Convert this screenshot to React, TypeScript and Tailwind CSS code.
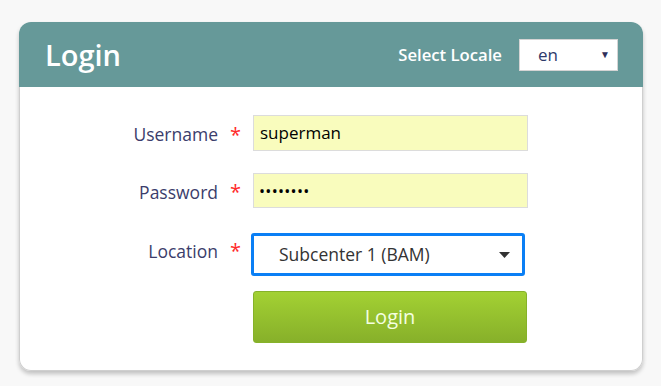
const font = { fontFamily: '"Open Sans", "Noto Sans", sans-serif' };

function Field({ label, children, labelClass = "" }: { label: string; children: React.ReactNode; labelClass?: string }) {
  return (
    <div className="flex items-center">
      <div className={`w-[198px] text-right text-[17.5px] text-[#3b3d6b] ${labelClass}`}>{label}</div>
      <div className={`w-[35px] pl-[12px] text-[20px] text-[#ff2a2a] ${labelClass}`}>*</div>
      {children}
    </div>
  );
}

export default function App() {
  return (
    <div className="min-h-[386px] w-full bg-[#f8f8f8] pt-[22px]" style={font}>
      <div className="ml-[19px] w-[624px] rounded-[12px] bg-white shadow-[0_3px_4px_rgba(0,0,0,0.22)]">
        <div className="flex h-[65px] items-center justify-between rounded-t-[12px] bg-[#669999] pl-[26px] pr-[25px]">
          <h1 className="text-[29px] font-semibold leading-none text-white">Login</h1>
          <div className="flex items-center gap-[17px]">
            <span className="text-[16.7px] font-semibold text-white">Select Locale</span>
            <div className="flex h-[32px] w-[99px] items-center justify-between border border-[#d4d4d4] bg-white pl-[18px] pr-[7px]">
              <span className="text-[17px] text-[#2f3a6b]">en</span>
              <span className="text-[10px] text-[#2f2f5a]">▼</span>
            </div>
          </div>
        </div>
        <div className="flex flex-col rounded-b-[12px] border-x border-b border-[#cfcfcf] pb-[27px] pt-[28px]">
          <Field label="Username" labelClass="mt-[3px]">
            <div className="flex h-[36px] w-[275px] items-center border border-[#dcdcdc] bg-[#f9fcbd] px-[6px] text-[17px] text-black">
              superman
            </div>
          </Field>
          <div className="mt-[22px]">
            <Field label="Password" labelClass="mt-[3px]">
              <div className="flex h-[35px] w-[275px] items-center border border-[#dcdcdc] bg-[#f9fcbd] px-[5px] text-[16px] tracking-[0.3px] text-black">
                ••••••••
              </div>
            </Field>
          </div>
          <div className="mt-[25px]">
            <Field label="Location" labelClass="-mt-[7px]">
              <div className="-ml-[2px] flex h-[43px] w-[274px] items-center justify-between rounded-[3px] border-[3px] border-[#0a7ff5] bg-white pl-[25px] pr-[12px]">
                <span className="text-[17.5px] text-[#333]">Subcenter 1 (BAM)</span>
                <svg width="11" height="6" viewBox="0 0 11 6">
                  <path d="M0 0 H11 L5.5 6 Z" fill="#333" />
                </svg>
              </div>
            </Field>
          </div>
          <div className="mt-[15px] flex pl-[233px]">
            <button className="h-[52px] w-[274px] rounded-[3px] border border-[#86b22a] bg-gradient-to-b from-[#a3d133] to-[#87b02a] text-[20px] text-[#f4ffe0]">
              Login
            </button>
          </div>
        </div>
      </div>
    </div>
  );
}
